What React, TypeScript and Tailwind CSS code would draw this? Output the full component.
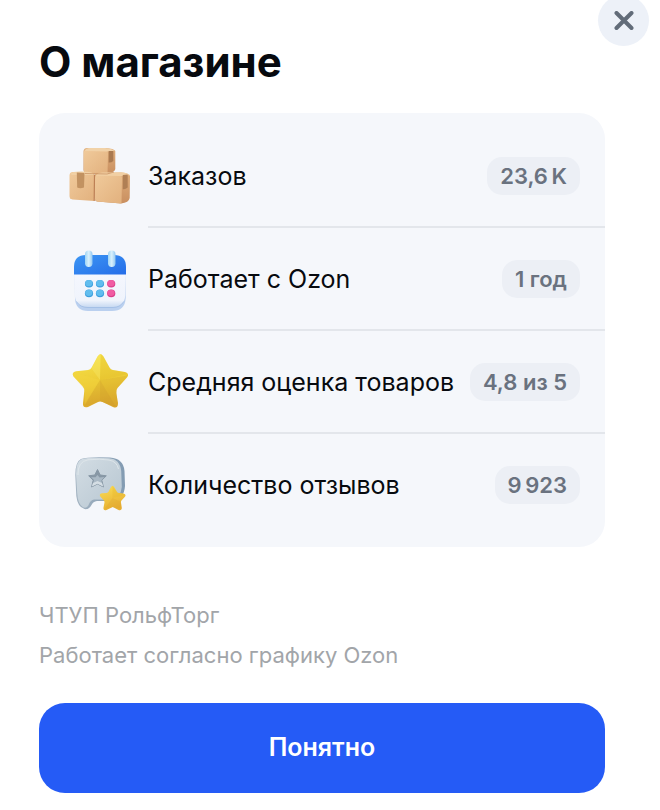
import type { ReactNode } from "react"

type Stat = { label: string; value: string; icon: ReactNode }

function BoxesIcon() {
  return (
    <svg viewBox="0 0 80 75" className="h-[75px] w-20" aria-hidden="true">
      <defs>
        <linearGradient id="boxFront" x1="0" y1="0" x2="1" y2="1">
          <stop offset="0" stopColor="#f0ca9b" />
          <stop offset="1" stopColor="#e2b17e" />
        </linearGradient>
        <linearGradient id="boxSide" x1="0" y1="0" x2="0" y2="1">
          <stop offset="0" stopColor="#dfae7b" />
          <stop offset="1" stopColor="#c98f60" />
        </linearGradient>
      </defs>
      <path d="M27 9 L46 9 Q54 9.5 55.3 12 L55.3 30 Q55 33 47 35 L26 34.5 Q23.5 33.5 23.5 31 L23.5 12 Q24 9 27 9Z" fill="url(#boxSide)" />
      <path d="M26 10.5 L45 11 Q48 11.5 48 14.5 L47.5 35 L26 34.5 Q23.8 34 23.8 31 L23.8 13 Q24 11 26 10.5Z" fill="url(#boxFront)" />
      <path d="M24.5 11.5 Q26 9 29 9 L45 9 Q52 9.5 54.5 12 L47.5 12.5 L26 12Z" fill="#f1d2a8" />
      <path d="M48.7 12 L53.3 12 L53.3 22 Q51 24 48.7 23.5Z" fill="#aa7a50" />
      <path d="M12 33 L31 33 Q34.5 34 34.5 37 L34.5 62 L12.5 60.5 Q9.5 60 9.5 57 L9.5 36 Q9.5 33.5 12 33Z" fill="url(#boxFront)" />
      <path d="M10.5 35 Q13 32.3 21 32.6 Q31 32.5 33.5 35 L33 36 L12 36Z" fill="#f1d0a4" />
      <path d="M16.8 33.5 L24.5 34 L24 48.5 Q20 50 17.2 48.5Z" fill="#c29261" />
      <path d="M38 34 L61 33.5 Q69.5 34 70 37 L69.7 59 Q69 63.5 61 64.5 L37 62.5 Q34.5 62 34.5 58 L34.5 37 Q35 34 38 34Z" fill="url(#boxSide)" />
      <path d="M38 35 L59 35.5 Q62 36 62 39 L61.5 64.4 L37 62.5 Q34.8 62 34.8 59 L35 38 Q35.5 35.5 38 35Z" fill="url(#boxFront)" />
      <path d="M36 36 Q38 33.5 42 33.5 L61 33.3 Q67.5 33.8 69.5 36 L61.5 37 L37 36.8Z" fill="#f1cfa3" />
      <path d="M62.8 36 L67.7 35.5 L67.7 48.5 Q65 50.8 62.8 50Z" fill="#b07f54" />
      <path d="M34.5 36 L34.2 61.5" stroke="#bd8055" strokeWidth="1.2" strokeLinecap="round" fill="none" />
      <path d="M25 34.5 L47 35 L54 33" stroke="#c48b5b" strokeWidth="0.7" fill="none" />
    </svg>
  )
}

function CalendarIcon() {
  return (
    <svg viewBox="0 0 80 75" className="h-[75px] w-20" aria-hidden="true">
      <defs>
        <linearGradient id="calBody" x1="0" y1="0" x2="0" y2="1">
          <stop offset="0" stopColor="#f5f7fe" />
          <stop offset="0.82" stopColor="#f0f4fc" />
          <stop offset="1" stopColor="#c8daf2" />
        </linearGradient>
        <linearGradient id="calTop" x1="0" y1="0" x2="1" y2="1">
          <stop offset="0" stopColor="#3c96f4" />
          <stop offset="1" stopColor="#256de8" />
        </linearGradient>
        <linearGradient id="calRing" x1="0" y1="0" x2="1" y2="0">
          <stop offset="0" stopColor="#9ed4f5" />
          <stop offset="0.5" stopColor="#d9f1fc" />
          <stop offset="1" stopColor="#92c8f2" />
        </linearGradient>
      </defs>
      <path d="M14.5 26 H65.7 V56 Q65 69 52 69 H28 Q16 69 15 57Z" fill="#bad0ef" />
      <path d="M14 28 H66 L65.3 53 Q64.5 65 53 65 H27 Q15.5 65 14.8 53Z" fill="url(#calBody)" />
      <path d="M16.5 59.5 Q20 65.5 28 65.5 H53 Q60 65.5 63.8 59.5" fill="none" stroke="#9bb9e3" strokeWidth="0.7" />
      <path d="M14 32.5 V25 Q14 13 26 13 H54 Q66 13 66 25 V32.5Z" fill="url(#calTop)" />
      <rect x="25" y="8.5" width="7.5" height="16.5" rx="3.7" fill="url(#calRing)" />
      <rect x="48" y="8.5" width="7.5" height="16.5" rx="3.7" fill="url(#calRing)" />
      <g fill="#3d9fde">
        <ellipse cx="29" cy="41.8" rx="4.1" ry="3.8" />
        <ellipse cx="40" cy="41.8" rx="4.1" ry="3.8" />
        <ellipse cx="29" cy="51.4" rx="4.1" ry="3.8" />
        <ellipse cx="40" cy="51.4" rx="4.1" ry="3.8" />
      </g>
      <g fill="#61bdee">
        <ellipse cx="28.8" cy="41.2" rx="3.6" ry="3.1" />
        <ellipse cx="39.8" cy="41.2" rx="3.6" ry="3.1" />
        <ellipse cx="28.8" cy="50.8" rx="3.6" ry="3.1" />
        <ellipse cx="39.8" cy="50.8" rx="3.6" ry="3.1" />
      </g>
      <g fill="#da3d8b">
        <ellipse cx="51.2" cy="41.8" rx="4.1" ry="3.8" />
        <ellipse cx="51.2" cy="51.4" rx="4.1" ry="3.8" />
      </g>
      <g fill="#f05ca3">
        <ellipse cx="51" cy="41.2" rx="3.6" ry="3.1" />
        <ellipse cx="51" cy="50.8" rx="3.6" ry="3.1" />
      </g>
    </svg>
  )
}

function StarIcon() {
  return (
    <svg viewBox="0 0 80 75" className="h-[75px] w-20" aria-hidden="true">
      <defs>
        <linearGradient id="starFill" x1="0.4" y1="0" x2="0.6" y2="1">
          <stop offset="0" stopColor="#f6e14a" />
          <stop offset="0.55" stopColor="#ecca34" />
          <stop offset="1" stopColor="#dba62c" />
        </linearGradient>
      </defs>
      <path
        d="M37.5 11.5 Q40.5 6.5 43.5 11.5 L49.5 22.5 Q50.5 24.8 53 25.1 L65 27 Q70 28.5 67 32.5 L57.5 43 Q56 45 56.3 48 L58 58 Q58 64 53 62 L42.5 57 Q40 56 37.5 57.2 L28 62 Q22.3 63.3 23 58 L24.3 46 Q24.5 43.5 22.5 41 L13.5 31.5 Q11 27.5 16 26.3 L28 25.1 Q30.5 24.8 31.8 22.3Z"
        fill="url(#starFill)"
      />
      <path d="M40.5 9 L40 35 L31.5 23.5 L37.5 11.5 Q39 9 40.5 9Z" fill="#faed76" opacity="0.3" />
      <path d="M41 9 L40 35 L68 29 Q67 27 64 27 L52 25.1 L49.5 22.5 L43.5 11.5Z" fill="#d9b21e" opacity="0.22" />
      <path d="M14 27.5 L40 35 L25 60 L24.3 44 L13.5 31.5Z" fill="#f5d641" opacity="0.3" />
      <path d="M40 35 L68 30.5 L56.5 44 L57.5 61 Q54 62 40 56Z" fill="#d19f2c" opacity="0.25" />
      <path d="M40 35 L24 60.5 Q27 62 40 56 L56 62Z" fill="#c38d2a" opacity="0.18" />
    </svg>
  )
}

function ReviewIcon() {
  return (
    <svg viewBox="0 0 80 75" className="h-[75px] w-20" aria-hidden="true">
      <defs>
        <linearGradient id="bubbleFront" x1="0" y1="0" x2="1" y2="1">
          <stop offset="0" stopColor="#d3dde4" />
          <stop offset="1" stopColor="#b7c6d1" />
        </linearGradient>
        <linearGradient id="bubbleEdge" x1="0" y1="0" x2="1" y2="0">
          <stop offset="0" stopColor="#a4b4c2" />
          <stop offset="1" stopColor="#829bb2" />
        </linearGradient>
        <linearGradient id="miniStar" x1="0" y1="0" x2="0.4" y2="1">
          <stop offset="0" stopColor="#fade55" />
          <stop offset="1" stopColor="#e8b032" />
        </linearGradient>
      </defs>
      <path d="M21 12 Q28 9.5 50 10.5 Q63.5 11.5 64.5 24 L65 39 Q64 53 52 54 L37 54 Q33 54.5 31.5 58 Q29 63 24.5 62 Q17.5 60 16.3 49 L15.3 28 Q15.3 14.5 21 12Z" fill="url(#bubbleEdge)" />
      <path d="M22 12 Q30 10 49 11.2 Q60 12 61.2 24 L61.8 40 Q61 51.5 50 52.8 L34 52.5 Q30.5 53 29 57 Q27 62 23 60.3 Q17.7 57 17.2 46 L16 27 Q16 14 22 12Z" fill="url(#bubbleFront)" />
      <path d="M18 28 Q17.5 14.5 28 12.8 Q40 11.5 49 13 Q57 14.5 58.5 22" fill="none" stroke="#dfe7eb" strokeWidth="0.9" />
      <path d="M37.5 22.5 L40.2 28 L46.3 28.8 L41.8 33.2 L43.4 40 L37.5 36.9 L31.6 40 L33.2 33.2 L28.7 28.8 L34.8 28Z" fill="#8797a5" stroke="#8797a5" strokeWidth="1" strokeLinejoin="round" />
      <path d="M37.5 28 L39.5 30.5 L44.5 30 L41.3 33.5 L43 39.5 L37.5 36.7 L32 39.5 L34 33 L31 30.2 L35.5 30.2Z" fill="#aab9c5" />
      <path d="M37.5 34 L42 36 L43.2 39.5 L37.5 36.7 L31.8 39.5 L33 36Z" fill="#d5dee4" />
      <path
        d="M50.7 40.5 Q52.5 37 54.5 40.5 L57 45 Q57.8 46 59 46 L63.5 46.5 Q67 47.5 64.5 50.3 L61.5 53.5 Q60.7 54.5 61 56 L61.8 61 Q61.5 64.3 58 62.7 L52.8 60 L46.5 63 Q43 64 43.5 60.5 L44.5 55.5 Q44.5 54 43.7 53.2 L40.3 49.5 Q38.8 46.7 42 46.3 L46.5 46 Q48 45.8 48.5 44.8Z"
        fill="url(#miniStar)"
      />
      <path d="M52.6 39 L52.5 51 L65 48 Q64 46.5 57.5 45.7Z" fill="#e8b72b" opacity="0.35" />
      <path d="M52.5 51 L61 55 L61.5 62 L52.5 60 L44.5 62Z" fill="#d69a29" opacity="0.2" />
    </svg>
  )
}

const stats: Stat[] = [
  { label: "Заказов", value: "23,6\u2009K", icon: <BoxesIcon /> },
  { label: "Работает с Ozon", value: "1 год", icon: <CalendarIcon /> },
  { label: "Средняя оценка товаров", value: "4,8 из 5", icon: <StarIcon /> },
  { label: "Количество отзывов", value: "9\u2009923", icon: <ReviewIcon /> },
]

export default function App() {
  return (
    <main className="relative min-h-screen overflow-hidden bg-white pt-9 pr-[55px] pb-4 pl-[39px] font-['Inter',sans-serif] text-[#070a0f]">
      <button
        type="button"
        aria-label="Закрыть"
        className="absolute -top-[5px] right-[11px] flex size-[51px] items-center justify-center rounded-full bg-[#edf1f8]"
      >
        <svg viewBox="0 0 20 20" className="size-5" fill="none" stroke="#626c79" strokeWidth="4" strokeLinecap="round">
          <path d="M2.5 2 L17.5 17 M17.5 2 L2.5 17" />
        </svg>
      </button>

      <h1 className="text-[42px] leading-[52px] font-bold">О магазине</h1>

      <dl className="mt-[25px] rounded-[26px] bg-[#f5f7fb] py-3">
        {stats.map((s) => (
          <div key={s.label} className="group flex items-center pl-[21px]">
            <div className="mr-2 shrink-0">{s.icon}</div>
            <div className="flex min-h-[103px] flex-1 items-center justify-between gap-3 border-b-2 border-[#e3e6eb] pr-[25px] group-last:min-h-[101px] group-last:border-b-0">
              <dt className="text-[25px] leading-8">{s.label}</dt>
              <dd className="shrink-0 rounded-[15px] bg-[#eceff5] px-[13px] py-1 text-[22px] leading-[30px] font-semibold text-[#6a727f]">
                {s.value}
              </dd>
            </div>
          </div>
        ))}
      </dl>

      <div className="mt-12 text-[22px] leading-10 text-[#a2a5a9]">
        <p>ЧТУП РольфТорг</p>
        <p>Работает согласно графику Ozon</p>
      </div>

      <button type="button" className="mt-7 h-[90px] w-full rounded-[26px] bg-[#255bf6] text-[25px] font-semibold text-white">
        Понятно
      </button>
    </main>
  )
}
